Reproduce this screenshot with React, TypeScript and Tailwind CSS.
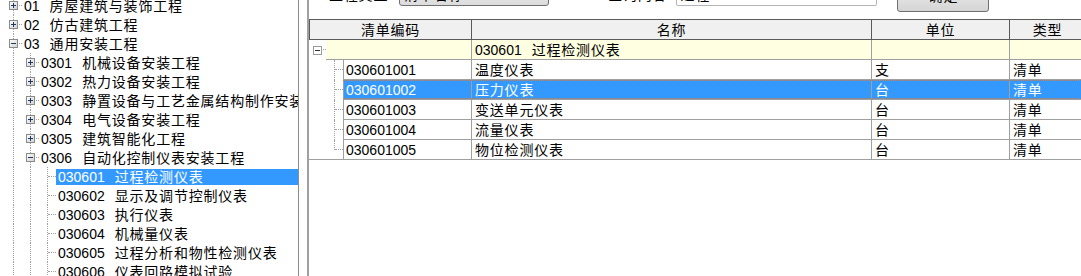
import React from "react"

const FONT = "font-['Liberation_Sans','Noto_Sans_CJK_SC',sans-serif]"

type TreeNode = {
  level: number
  code: string
  name: string
  kind: "plus" | "minus" | "leaf"
  selected?: boolean
}

const TREE: TreeNode[] = [
  { level: 0, code: "01", name: "房屋建筑与装饰工程", kind: "plus" },
  { level: 0, code: "02", name: "仿古建筑工程", kind: "plus" },
  { level: 0, code: "03", name: "通用安装工程", kind: "minus" },
  { level: 1, code: "0301", name: "机械设备安装工程", kind: "plus" },
  { level: 1, code: "0302", name: "热力设备安装工程", kind: "plus" },
  { level: 1, code: "0303", name: "静置设备与工艺金属结构制作安装工程", kind: "plus" },
  { level: 1, code: "0304", name: "电气设备安装工程", kind: "plus" },
  { level: 1, code: "0305", name: "建筑智能化工程", kind: "plus" },
  { level: 1, code: "0306", name: "自动化控制仪表安装工程", kind: "minus" },
  { level: 2, code: "030601", name: "过程检测仪表", kind: "leaf", selected: true },
  { level: 2, code: "030602", name: "显示及调节控制仪表", kind: "leaf" },
  { level: 2, code: "030603", name: "执行仪表", kind: "leaf" },
  { level: 2, code: "030604", name: "机械量仪表", kind: "leaf" },
  { level: 2, code: "030605", name: "过程分析和物性检测仪表", kind: "leaf" },
  { level: 2, code: "030606", name: "仪表回路模拟试验", kind: "leaf" },
]

const ROWS = [
  { code: "030601001", name: "温度仪表", unit: "支", type: "清单" },
  { code: "030601002", name: "压力仪表", unit: "台", type: "清单", selected: true },
  { code: "030601003", name: "变送单元仪表", unit: "台", type: "清单" },
  { code: "030601004", name: "流量仪表", unit: "台", type: "清单" },
  { code: "030601005", name: "物位检测仪表", unit: "台", type: "清单" },
]

function Expander({ open }: { open: boolean }) {
  return (
    <svg width="9" height="9" viewBox="0 0 9 9" className="relative z-[1] block">
      <defs>
        <linearGradient id="exp" x1="0" y1="0" x2="1" y2="1">
          <stop offset="0" stopColor="#ffffff" />
          <stop offset="1" stopColor="#d0d0d0" />
        </linearGradient>
      </defs>
      <rect x="0.5" y="0.5" width="8" height="8" fill="url(#exp)" stroke="#8a8a8a" />
      <path d="M2 4.5h5" stroke="#1f3763" />
      {!open && <path d="M4.5 2v5" stroke="#1f3763" />}
    </svg>
  )
}

// one indent column of the tree: dotted trunk, plus a stub for the node's own column
function Indent({ own, kind }: { own: boolean; kind?: TreeNode["kind"] }) {
  return (
    <div className="relative w-[17px] h-full shrink-0 flex items-center justify-center">
      <div className="absolute left-[8px] top-0 bottom-0 border-l border-dotted border-[#a0a0a0]" />
      {own && <div className="absolute left-[9px] right-0 top-[9px] border-t border-dotted border-[#a0a0a0]" />}
      {own && kind !== "leaf" && <Expander open={kind === "minus"} />}
    </div>
  )
}

function TreePanel() {
  return (
    <div className="w-[299px] h-full shrink-0 bg-white border-r border-[#8c8c8c] overflow-hidden">
      <div className="-mt-[4px] pl-[5px]">
        {TREE.map((n) => (
          <div key={n.code} className="flex h-[19px] items-center">
            {Array.from({ length: n.level + 1 }, (_, i) => (
              <Indent key={i} own={i === n.level} kind={n.kind} />
            ))}
            <div
              className={`flex-1 min-w-0 h-[16px] flex items-center pl-[2px] whitespace-nowrap text-[14px] leading-[16px] ${
                n.selected ? "bg-[#3399ff] text-white" : "text-black"
              }`}
            >
              <span>{n.code}</span>
              <span className="ml-[10px] tracking-[0.8px]">{n.name}</span>
            </div>
          </div>
        ))}
      </div>
    </div>
  )
}

function Toolbar() {
  return (
    <div className="h-[19px] shrink-0 overflow-hidden">
      <div className="flex items-start -mt-[20px] text-[14px] leading-[16px] text-black whitespace-nowrap">
        <span className="ml-[20px] mt-[7px] tracking-[0.8px]">工程类型</span>
        <div className="ml-[11px] w-[150px] h-[26px] rounded-[3px] border border-[#707070] bg-gradient-to-b from-[#f3f3f3] to-[#dcdcdc] pl-[4px] pt-[6px] tracking-[0.8px]">
          清单名称
        </div>
        <span className="ml-[59px] mt-[7px] tracking-[0.8px]">查询内容</span>
        <div className="ml-[9px] w-[201px] h-[26px] rounded-[2px] border border-[#b5b5b5] bg-white pl-[3px] pt-[6px] tracking-[0.8px]">
          过程
        </div>
        <div className="ml-[20px] w-[92px] h-[32px] rounded-[3px] border border-[#707070] bg-gradient-to-b from-[#f4f4f4] to-[#d4d4d4] pt-[7px] text-center tracking-[0.8px]">
          确定
        </div>
      </div>
    </div>
  )
}

function Grid() {
  const cell = "h-full shrink-0 flex items-center whitespace-nowrap border-r border-b border-[#a0a0a0]"
  const head = "h-full border-r border-[#5a5a5a] flex items-center justify-center tracking-[0.8px]"
  return (
    <div className="text-[14px] leading-[16px] text-black">
      {/* header */}
      <div className="flex h-[21px] border-y border-l border-[#5a5a5a] bg-[#f0f0f0] w-max">
        <div className={`w-[162px] ${head}`}>清单编码</div>
        <div className={`w-[400px] ${head}`}>名称</div>
        <div className={`w-[138px] ${head}`}>单位</div>
        <div className={`w-[76px] ${head}`}>类型</div>
      </div>

      {/* group row */}
      <div className="flex h-[20px] w-max">
        <div className="relative w-[17px] h-full shrink-0 flex items-center justify-center">
          <div className="absolute left-[8px] right-0 top-[9px] border-t border-dotted border-[#a0a0a0]" />
          <svg width="9" height="9" viewBox="0 0 9 9" className="relative block">
            <rect x="0.5" y="0.5" width="8" height="8" fill="#fff" stroke="#9a9a9a" />
            <path d="M2 4.5h5" stroke="#333" />
          </svg>
        </div>
        <div className={`${cell} w-[146px] bg-[#ffffe1]`} />
        <div className={`${cell} w-[400px] bg-[#ffffe1] pl-[3px]`}>
          <span>030601</span>
          <span className="ml-[10px] tracking-[0.8px]">过程检测仪表</span>
        </div>
        <div className={`${cell} w-[138px] bg-[#ffffe1]`} />
        <div className={`${cell} w-[76px] bg-[#ffffe1]`} />
      </div>

      {/* item rows */}
      {ROWS.map((r, i) => {
        const last = i === ROWS.length - 1
        const sel = !!r.selected
        const fill = sel ? "bg-[#3399ff] text-white" : "bg-white"
        return (
          <div key={r.code} className="flex h-[20px] w-max">
            <div className={`w-[17px] h-full shrink-0 ${last ? "border-b border-[#a0a0a0]" : ""}`} />
            <div className={`relative w-[17px] h-full shrink-0 ${last ? "border-b border-[#a0a0a0]" : ""}`}>
              <div
                className={`absolute left-[8px] top-0 border-l border-dotted border-[#a0a0a0] ${last ? "h-[10px]" : "bottom-0"}`}
              />
              <div className="absolute left-[9px] right-0 top-[9px] border-t border-dotted border-[#a0a0a0]" />
            </div>
            <div className="relative flex h-full">
              <div className={`${cell} w-[129px] border-l pl-[2px] ${fill}`}>{r.code}</div>
              <div className={`${cell} w-[400px] pl-[3px] tracking-[0.8px] ${fill}`}>{r.name}</div>
              <div className={`${cell} w-[138px] pl-[3px] ${fill}`}>{r.unit}</div>
              <div className={`${cell} w-[76px] pl-[3px] tracking-[0.8px] ${fill}`}>{r.type}</div>
              {sel && (
                <div className="absolute left-0 right-0 top-0 h-[19px] border-y border-dotted border-[#e07a2a] pointer-events-none" />
              )}
            </div>
          </div>
        )
      })}
    </div>
  )
}

export default function App() {
  return (
    <div className={`w-[1081px] h-[276px] overflow-hidden flex bg-white ${FONT}`}>
      <TreePanel />
      <div className="w-[8px] h-full shrink-0 bg-white" />
      <div className="w-[2px] h-full shrink-0 bg-[#a0a0a0]" />
      <div className="flex-1 min-w-0 h-full flex flex-col overflow-hidden">
        <Toolbar />
        <Grid />
      </div>
    </div>
  )
}
